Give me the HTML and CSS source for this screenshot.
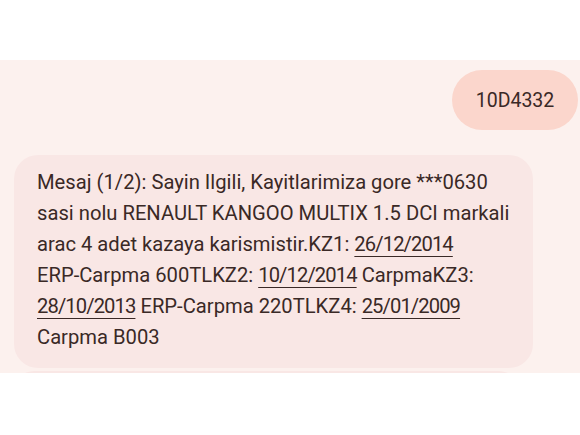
FILE: index.html
```html
<!DOCTYPE html>
<html lang="tr">
<head>
    <meta charset="UTF-8">
    <title>Mesajlar</title>
    <link rel="stylesheet" href="styles.css">
</head>
<body>
    <div class="top"></div>

    <div class="chat">
        <div class="row out">
            <div class="bubble sent">10D4332</div>
        </div>
        <div class="row in">
            <div class="bubble recv">
                Mesaj (1/2): Sayin Ilgili, Kayitlarimiza gore ***0630<br>
                sasi nolu RENAULT KANGOO MULTIX 1.5 DCI markali<br>
                arac 4 adet kazaya karismistir.KZ1: <u>26/12/2014</u><br>
                ERP-Carpma 600TLKZ2: <u>10/12/2014</u> CarpmaKZ3:<br>
                <u>28/10/2013</u> ERP-Carpma 220TLKZ4: <u>25/01/2009</u><br>
                Carpma B003
            </div>
        </div>
        <div class="row in next">
            <div class="bubble recv peek"></div>
        </div>
    </div>
</body>
</html>
```

FILE: styles.css
```css
html, body
{
    margin: 0;
    padding: 0;
    background: #ffffff;
}
body
{
    font-family: Roboto, "Open Sans", sans-serif;
    color: #3a2926;
}
.top
{
    height: 60px;
}
.chat
{
    background: #fcf1ee;
    height: 313px;
    overflow: hidden;
    padding: 10px 2px 0 14px;
    box-sizing: border-box;
    display: flex;
    flex-direction: column;
}
.row
{
    display: flex;
}
.out
{
    justify-content: flex-end;
}
.in
{
    margin-top: 25px;
}
.next
{
    margin-top: 3px;
}
.bubble.sent
{
    background: #fbd6cc;
    height: 60px;
    width: 126px;
    border-radius: 30px;
    display: flex;
    align-items: center;
    justify-content: center;
    font-size: 19.5px;
}
.bubble.recv
{
    background: #f9e7e5;
    border-radius: 24px;
    width: 519px;
    box-sizing: border-box;
    padding: 12px 6px 15px 23px;
    font-size: 20.2px;
    line-height: 31px;
}
/* tarihler */
.recv u
{
    letter-spacing: -0.9px;
    text-underline-offset: 5px;
    text-decoration-thickness: 1.2px;
}
.bubble.peek
{
    width: 505px;
    height: 40px;
    flex-shrink: 0;
}
```
